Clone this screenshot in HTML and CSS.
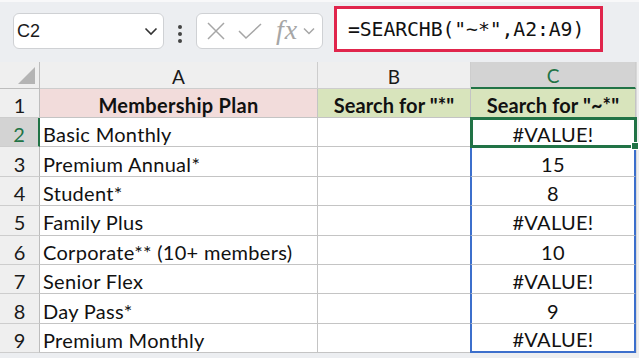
FILE: index.html
```html
<!DOCTYPE html>
<html>
  <head>
    <link rel="stylesheet" href="styles.css">
  </head>
  <body>
    <div class="toolbar">
      <div class="name-box">
        <span class="name-box-ref">C2</span>
        <svg class="chevron" width="14" height="10" viewBox="0 0 14 10"><polyline points="1.5,2.5 7,8 12.5,2.5" fill="none" stroke="#333" stroke-width="1.6"/></svg>
      </div>
      <div class="grip"><span></span><span></span><span></span></div>
      <div class="fx-box">
        <svg width="20" height="20" viewBox="0 0 20 20"><path d="M2 2 L18 18 M18 2 L2 18" stroke="#a6a6a6" stroke-width="1.5" fill="none"/></svg>
        <svg width="26" height="20" viewBox="0 0 26 20"><polyline points="2,10 9,17 24,3" stroke="#a6a6a6" stroke-width="1.5" fill="none"/></svg>
        <span class="fx-label">fx</span>
        <svg class="fx-chevron" width="12" height="8" viewBox="0 0 12 8"><polyline points="1,1.5 6,6.5 11,1.5" fill="none" stroke="#a6a6a6" stroke-width="1.5"/></svg>
      </div>
      <div class="formula-bar">=SEARCHB("~*",A2:A9)</div>
    </div>

    <div class="sheet">
      <div class="corner"></div>
      <div class="col-head">A</div>
      <div class="col-head">B</div>
      <div class="col-head col-active">C</div>
      <div class="edge"></div>

      <div class="row-head">1</div>
      <div class="cell head-pink">Membership Plan</div>
      <div class="cell head-green">Search for "*"</div>
      <div class="cell head-green">Search for "~*"</div>
      <div class="edge"></div>

      <div class="row-head row-active">2</div>
      <div class="cell">Basic Monthly</div>
      <div class="cell"></div>
      <div class="cell num selected">#VALUE!</div>
      <div class="edge"></div>

      <div class="row-head">3</div>
      <div class="cell">Premium Annual*</div>
      <div class="cell"></div>
      <div class="cell num ranged">15</div>
      <div class="edge"></div>

      <div class="row-head">4</div>
      <div class="cell">Student*</div>
      <div class="cell"></div>
      <div class="cell num ranged">8</div>
      <div class="edge"></div>

      <div class="row-head">5</div>
      <div class="cell">Family Plus</div>
      <div class="cell"></div>
      <div class="cell num ranged">#VALUE!</div>
      <div class="edge"></div>

      <div class="row-head">6</div>
      <div class="cell">Corporate** (10+ members)</div>
      <div class="cell"></div>
      <div class="cell num ranged">10</div>
      <div class="edge"></div>

      <div class="row-head">7</div>
      <div class="cell">Senior Flex</div>
      <div class="cell"></div>
      <div class="cell num ranged">#VALUE!</div>
      <div class="edge"></div>

      <div class="row-head">8</div>
      <div class="cell">Day Pass*</div>
      <div class="cell"></div>
      <div class="cell num ranged">9</div>
      <div class="edge"></div>

      <div class="row-head">9</div>
      <div class="cell">Premium Monthly</div>
      <div class="cell"></div>
      <div class="cell num ranged range-end">#VALUE!</div>
      <div class="edge"></div>
    </div>
  </body>
</html>
```

FILE: styles.css
```css
body {
  margin: 0;
  background: #eceef1;
  font-family: Lato, "Open Sans", sans-serif;
  color: #111;
  height: 358px;
  overflow: hidden;
}

/* formula toolbar */
.toolbar {
  height: 62px;
  display: flex;
  align-items: flex-start;
  box-sizing: border-box;
  padding: 0 0 0 13px;
  border-top: 2px solid #f8f8f9;
}
.name-box {
  width: 151px;
  height: 36px;
  box-sizing: border-box;
  background: #fff;
  border: 1px solid #cfd1d4;
  border-radius: 6px;
  display: flex;
  align-items: center;
  justify-content: space-between;
  padding: 0 5px 0 3px;
  margin-top: 11px;
}
.name-box-ref {
  font-family: "Liberation Sans", Arial, sans-serif;
  font-size: 18px;
  color: #1a1a1a;
}
.grip {
  width: 32px;
  margin-top: 23px;
  display: flex;
  flex-direction: column;
  align-items: center;
  gap: 3px;
}
.grip span {
  width: 4px;
  height: 4px;
  border-radius: 2px;
  background: #444;
}
.fx-box {
  width: 127px;
  height: 36px;
  box-sizing: border-box;
  background: #fff;
  border: 1px solid #cfd1d4;
  border-radius: 6px;
  display: flex;
  align-items: center;
  gap: 11px;
  padding: 0 0 0 9px;
  margin-top: 11px;
}
.fx-label {
  font-family: "Liberation Serif", serif;
  font-style: italic;
  font-size: 28px;
  line-height: 1;
  color: #a6a6a6;
  letter-spacing: 1px;
  margin-top: -3px;
  margin-left: 2px;
}
.fx-chevron {
  margin-left: -6px;
}
.formula-bar {
  margin: 4px 0 0 11px;
  width: 269px;
  height: 46px;
  box-sizing: border-box;
  background: #fff;
  border: 3px solid #e0254c;
  display: flex;
  align-items: center;
  padding-left: 11px;
  font-family: "DejaVu Sans Mono", "Liberation Mono", monospace;
  font-size: 19.8px;
  letter-spacing: -0.1px;
  color: #111;
}

/* sheet grid */
.sheet {
  display: grid;
  grid-template-columns: 40px 278px 153px 165px 1fr;
  grid-template-rows: 27px 29px repeat(8, 29.4px);
  background: #fff;
  font-size: 20px;
  letter-spacing: 0.3px;
}
.corner,
.col-head,
.row-head {
  background: #efefef;
  border-right: 1px solid #cdcdcd;
  border-bottom: 1px solid #cdcdcd;
  box-sizing: border-box;
  display: flex;
  align-items: center;
  justify-content: center;
  color: #1a1a1a;
  letter-spacing: 0;
}
.corner {
  position: relative;
  border-right-color: #bdbdbd;
  border-bottom-color: #bdbdbd;
}
.corner::after {
  content: "";
  position: absolute;
  right: 4px;
  bottom: 4px;
  border-style: solid;
  border-width: 0 0 17px 17px;
  border-color: transparent transparent #b4b4b4 transparent;
}
.col-head {
  padding-top: 2px;
  font-size: 19px;
}
.col-active {
  background: #d3d3d3;
  color: #217346;
  border-bottom: 2px solid #217346;
}
.row-head {
  border-right-color: #bdbdbd;
  padding-top: 4px;
}
.row-active {
  background: #d3d3d3;
  color: #217346;
  border-right: 2px solid #217346;
}
.edge {
  background: #efefef;
  border-left: 1px solid #d8d8d8;
}
.cell {
  border-right: 1px solid #c4c4c4;
  border-bottom: 1px solid #c4c4c4;
  box-sizing: border-box;
  display: flex;
  align-items: center;
  padding: 4px 3px 0;
  white-space: nowrap;
}
.head-pink {
  background: #f2dcdb;
  font-weight: bold;
  justify-content: center;
}
.head-green {
  background: #d8e4bc;
  font-weight: bold;
  justify-content: center;
  letter-spacing: 0.1px;
}
.num {
  justify-content: center;
}
.selected {
  position: relative;
  outline: 3px solid #217346;
  outline-offset: -2px;
  z-index: 2;
}
.selected::after {
  content: "";
  position: absolute;
  right: -4px;
  bottom: -4px;
  width: 6px;
  height: 6px;
  background: #217346;
  border: 1px solid #fff;
}
.ranged {
  border-left: 2px solid #3c6fcc;
  border-right: 2px solid #3c6fcc;
  margin-left: -1px;
}
.range-end {
  border-bottom: 2px solid #3c6fcc;
}
```
